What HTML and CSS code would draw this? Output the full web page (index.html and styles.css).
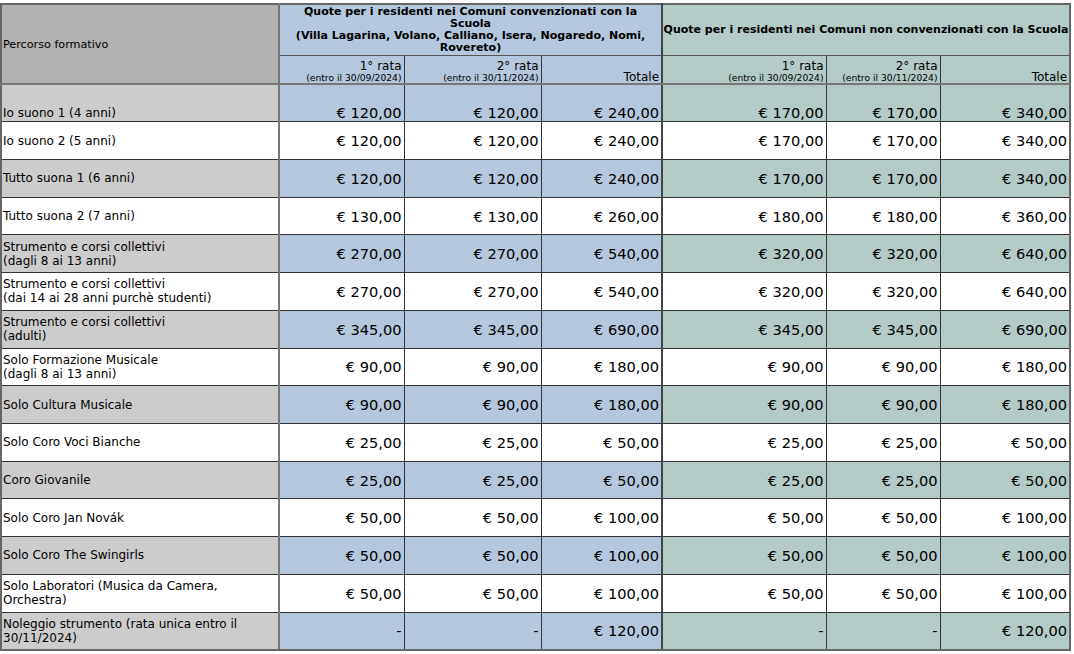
FILE: index.html
```html
<!DOCTYPE html>
<html lang="it">
<head>
<meta charset="utf-8">
<title>Quote</title>
<link rel="stylesheet" href="styles.css">
</head>
<body>
<table class="fees">
<colgroup>
<col class="c1"><col class="c2"><col class="c3"><col class="c4"><col class="c5"><col class="c6"><col class="c7">
</colgroup>
<thead>
<tr class="h1">
<th rowspan="2" class="hname">Percorso formativo</th>
<th colspan="3" class="hblue">Quote per i residenti nei Comuni convenzionati con la Scuola<br>(Villa Lagarina, Volano, Calliano, Isera, Nogaredo, Nomi, Rovereto)</th>
<th colspan="3" class="hgreen hgrp">Quote per i residenti nei Comuni non convenzionati con la Scuola</th>
</tr>
<tr class="h2">
<th class="hblue sub">1° rata<br><small>(entro il 30/09/2024)</small></th>
<th class="hblue sub">2° rata<br><small>(entro il 30/11/2024)</small></th>
<th class="hblue sub sep">Totale</th>
<th class="hgreen sub">1° rata<br><small>(entro il 30/09/2024)</small></th>
<th class="hgreen sub">2° rata<br><small>(entro il 30/11/2024)</small></th>
<th class="hgreen sub">Totale</th>
</tr>
</thead>
<tbody>
<tr class="alt first"><td class="name">Io suono 1 (4 anni)</td><td>€ 120,00</td><td>€ 120,00</td><td class="sep">€ 240,00</td><td>€ 170,00</td><td>€ 170,00</td><td>€ 340,00</td></tr>
<tr><td class="name">Io suono 2 (5 anni)</td><td>€ 120,00</td><td>€ 120,00</td><td class="sep">€ 240,00</td><td>€ 170,00</td><td>€ 170,00</td><td>€ 340,00</td></tr>
<tr class="alt"><td class="name">Tutto suona 1 (6 anni)</td><td>€ 120,00</td><td>€ 120,00</td><td class="sep">€ 240,00</td><td>€ 170,00</td><td>€ 170,00</td><td>€ 340,00</td></tr>
<tr><td class="name">Tutto suona 2 (7 anni)</td><td>€ 130,00</td><td>€ 130,00</td><td class="sep">€ 260,00</td><td>€ 180,00</td><td>€ 180,00</td><td>€ 360,00</td></tr>
<tr class="alt"><td class="name">Strumento e corsi collettivi<br>(dagli 8 ai 13 anni)</td><td>€ 270,00</td><td>€ 270,00</td><td class="sep">€ 540,00</td><td>€ 320,00</td><td>€ 320,00</td><td>€ 640,00</td></tr>
<tr><td class="name">Strumento e corsi collettivi<br>(dai 14 ai 28 anni purchè studenti)</td><td>€ 270,00</td><td>€ 270,00</td><td class="sep">€ 540,00</td><td>€ 320,00</td><td>€ 320,00</td><td>€ 640,00</td></tr>
<tr class="alt"><td class="name">Strumento e corsi collettivi<br>(adulti)</td><td>€ 345,00</td><td>€ 345,00</td><td class="sep">€ 690,00</td><td>€ 345,00</td><td>€ 345,00</td><td>€ 690,00</td></tr>
<tr><td class="name">Solo Formazione Musicale<br>(dagli 8 ai 13 anni)</td><td>€ 90,00</td><td>€ 90,00</td><td class="sep">€ 180,00</td><td>€ 90,00</td><td>€ 90,00</td><td>€ 180,00</td></tr>
<tr class="alt"><td class="name">Solo Cultura Musicale</td><td>€ 90,00</td><td>€ 90,00</td><td class="sep">€ 180,00</td><td>€ 90,00</td><td>€ 90,00</td><td>€ 180,00</td></tr>
<tr><td class="name">Solo Coro Voci Bianche</td><td>€ 25,00</td><td>€ 25,00</td><td class="sep">€ 50,00</td><td>€ 25,00</td><td>€ 25,00</td><td>€ 50,00</td></tr>
<tr class="alt"><td class="name">Coro Giovanile</td><td>€ 25,00</td><td>€ 25,00</td><td class="sep">€ 50,00</td><td>€ 25,00</td><td>€ 25,00</td><td>€ 50,00</td></tr>
<tr><td class="name">Solo Coro Jan Novák</td><td>€ 50,00</td><td>€ 50,00</td><td class="sep">€ 100,00</td><td>€ 50,00</td><td>€ 50,00</td><td>€ 100,00</td></tr>
<tr class="alt"><td class="name">Solo Coro The Swingirls</td><td>€ 50,00</td><td>€ 50,00</td><td class="sep">€ 100,00</td><td>€ 50,00</td><td>€ 50,00</td><td>€ 100,00</td></tr>
<tr><td class="name">Solo Laboratori (Musica da Camera,<br>Orchestra)</td><td>€ 50,00</td><td>€ 50,00</td><td class="sep">€ 100,00</td><td>€ 50,00</td><td>€ 50,00</td><td>€ 100,00</td></tr>
<tr class="alt"><td class="name">Noleggio strumento (rata unica entro il<br>30/11/2024)</td><td>-</td><td>-</td><td class="sep">€ 120,00</td><td>-</td><td>-</td><td>€ 120,00</td></tr>
</tbody>
</table>
</body>
</html>
```
FILE: styles.css
```css
html, body {
  margin: 0;
  padding: 0;
  background: #ffffff;
}
body {
  padding: 3px 0 0 0;
  font-family: "DejaVu Sans", sans-serif;
  color: #000;
}
.fees {
  border-collapse: collapse;
  table-layout: fixed;
  width: 1069px;
  border: 2px solid #666666;
}
.c1 { width: 278px; }
.c2 { width: 125px; }
.c3 { width: 137px; }
.c4 { width: 121px; }
.c5 { width: 164px; }
.c6 { width: 114px; }
.c7 { width: 130px; }

.fees th, .fees td {
  border: 1px solid #333333;
  padding: 0 2px 0 1px;
  overflow: hidden;
}
.fees th {
  font-weight: normal;
}
.h1 th {
  height: 50px;
  border-bottom: 1px solid #555555;
}
.hname {
  background: #b2b2b2;
  text-align: left;
  font-size: 11.2px;
  vertical-align: middle;
  border-right: 2px solid #777777 !important;
  border-bottom: 2px solid #777777 !important;
}
.hblue {
  background: #b4c7dc;
}
.hgreen {
  background: #b3cac6;
}
.h1 .hblue, .h1 .hgreen {
  font-weight: bold;
  font-size: 11px;
  line-height: 12px;
  text-align: center;
  vertical-align: middle;
  padding: 0 3px;
}
.h1 .hgreen {
  padding: 0;
}
.h1 .hblue {
  border-right: 2px solid #444444;
}
.h2 th {
  height: 27px;
  border-bottom: 2px solid #777777;
}
.sub {
  text-align: right;
  vertical-align: bottom;
  font-size: 12px;
  line-height: 11px;
  padding-bottom: 4px;
}
.sub small {
  font-size: 9.2px;
  line-height: 10px;
}
.sep {
  border-right: 2px solid #444444 !important;
}
.fees tbody tr {
  height: 37.73px;
}
.fees td {
  text-align: right;
  vertical-align: middle;
  font-size: 14.6px;
  line-height: 17px;
  background: #ffffff;
}
.fees tr.first td {
  vertical-align: bottom;
  padding-bottom: 0;
}
.fees td.name {
  text-align: left;
  font-size: 12px;
  line-height: 14px;
  border-right: 2px solid #777777;
}
.fees tr.first td.name {
  padding-bottom: 1px;
}
.fees tr.alt td {
  background: #b4c7dc;
}
.fees tr.alt td:nth-child(n+5) {
  background: #b3cac6;
}
.fees tr.alt td.name {
  background: #cccccc;
}
.fees tr:last-child td {
  border-bottom: 2px solid #666666;
}
```
